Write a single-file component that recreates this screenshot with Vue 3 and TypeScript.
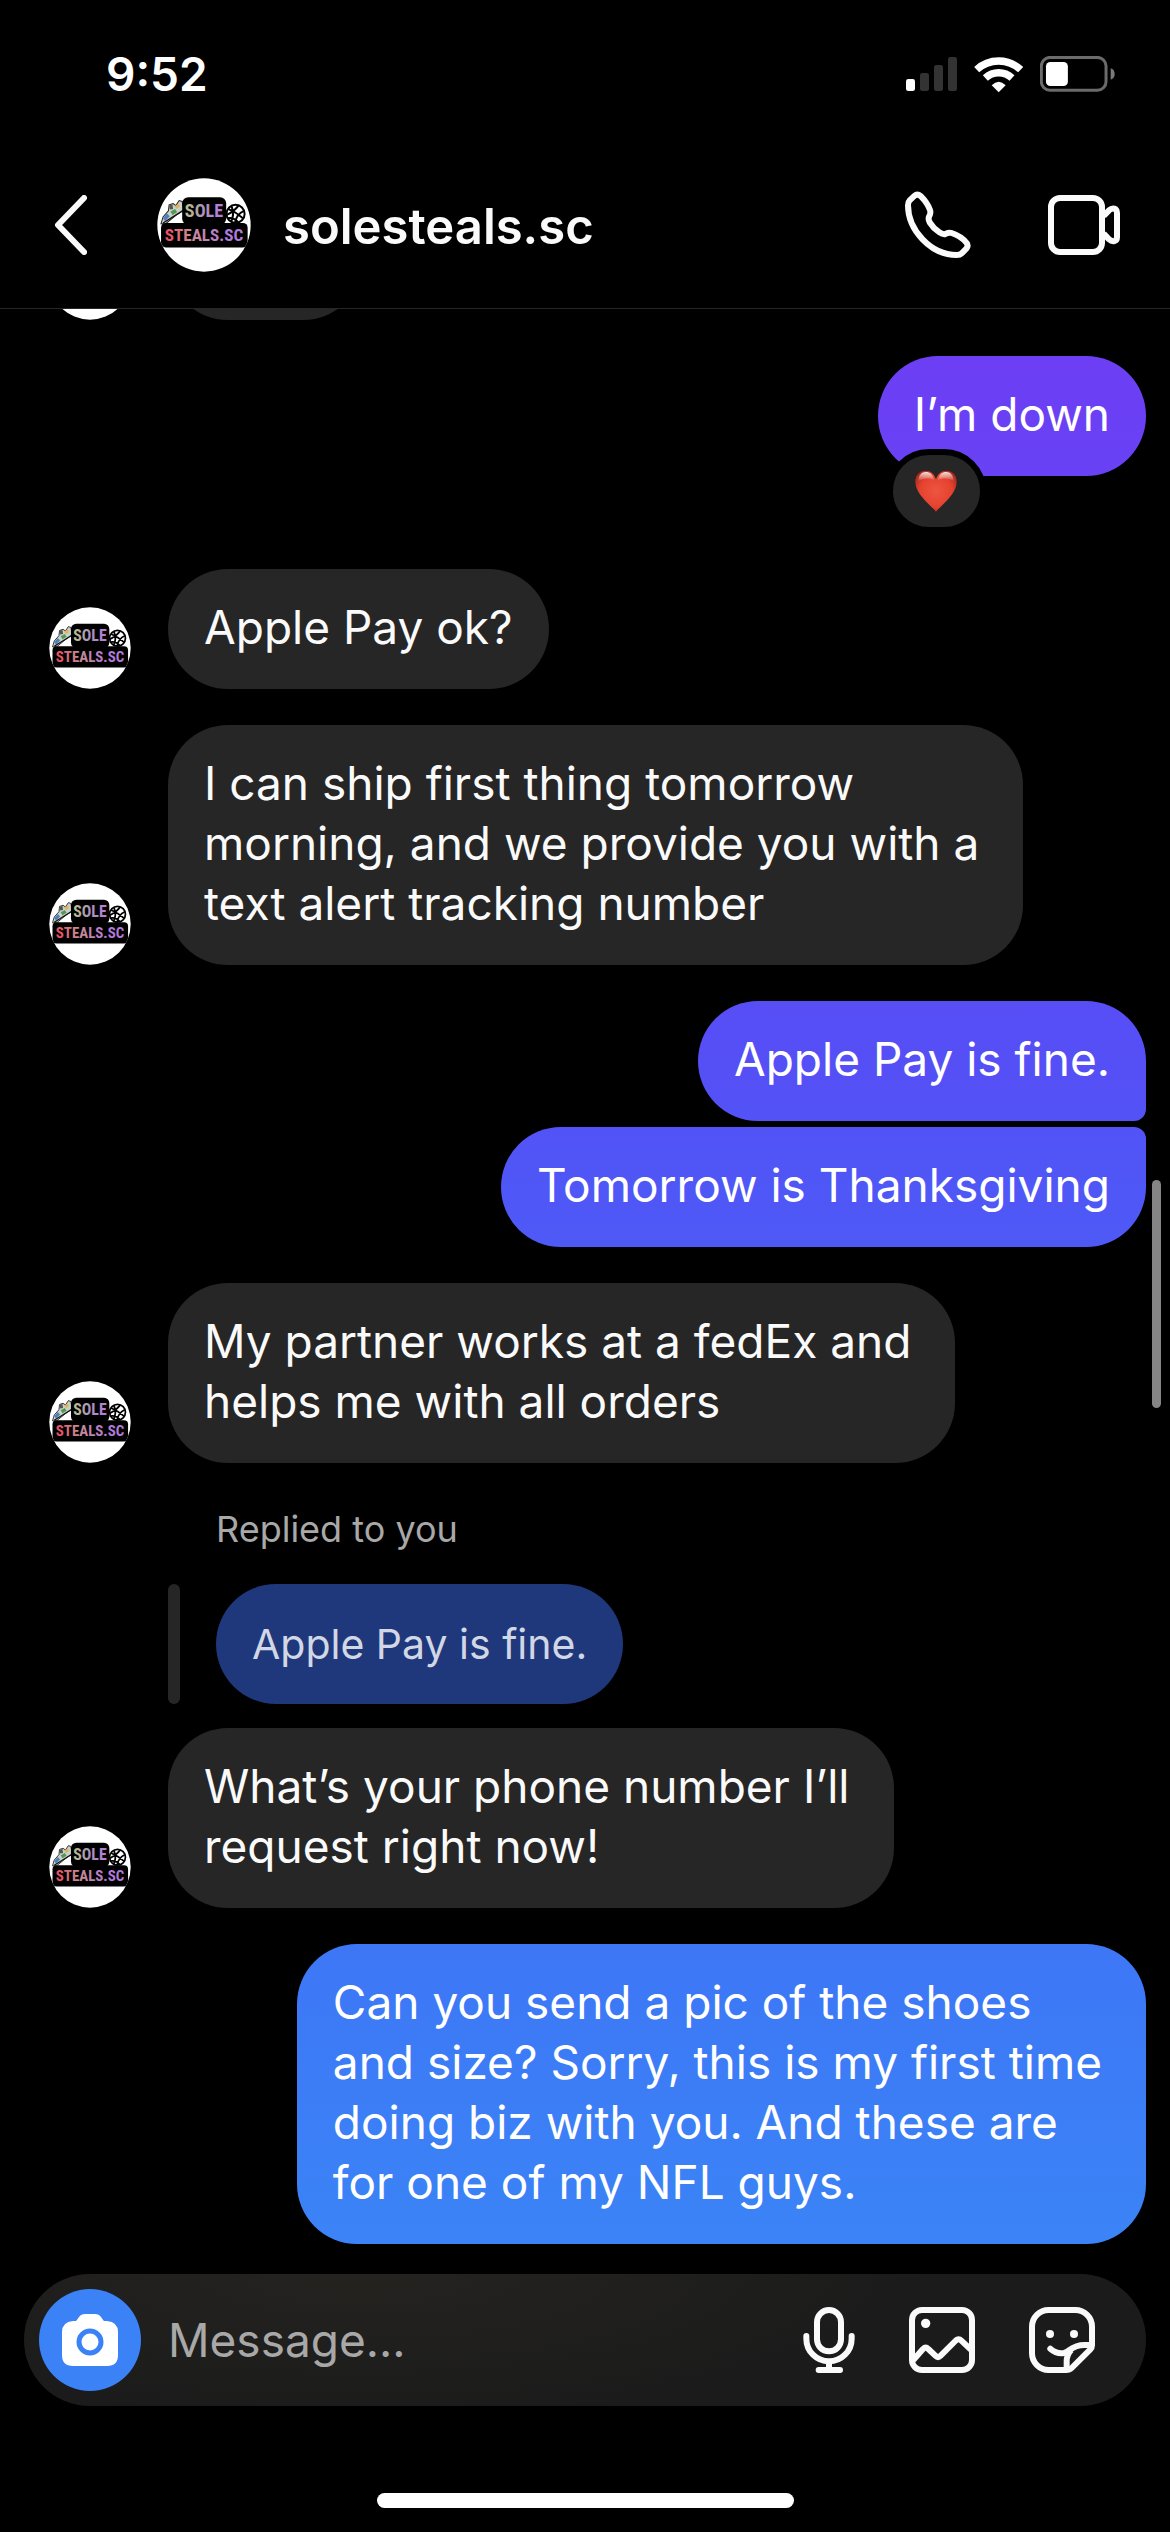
<script setup lang="ts">
import { ref } from 'vue'

interface Message {
  text: string
  joinTop?: boolean
  joinBottom?: boolean
  liked?: boolean
}

interface Group {
  from: 'me' | 'them'
  quote?: string
  clipped?: boolean
  messages: Message[]
}

const contact = 'solesteals.sc'
const draft = ref('')

const isMultiline = (message: Message): boolean => message.text.includes('\n')

const groups: Group[] = [
  { from: 'them', clipped: true, messages: [{ text: '' }] },
  { from: 'me', messages: [{ text: 'I’m down', liked: true }] },
  { from: 'them', messages: [{ text: 'Apple Pay ok?' }] },
  {
    from: 'them',
    messages: [
      { text: 'I can ship first thing tomorrow\nmorning, and we provide you with a\ntext alert tracking number' },
    ],
  },
  {
    from: 'me',
    messages: [
      { text: 'Apple Pay is fine.', joinBottom: true },
      { text: 'Tomorrow is Thanksgiving', joinTop: true },
    ],
  },
  { from: 'them', messages: [{ text: 'My partner works at a fedEx and\nhelps me with all orders' }] },
  {
    from: 'them',
    quote: 'Apple Pay is fine.',
    messages: [{ text: 'What’s your phone number I’ll\nrequest right now!' }],
  },
  {
    from: 'me',
    messages: [
      {
        text: 'Can you send a pic of the shoes\nand size? Sorry, this is my first time\ndoing biz with you. And these are\nfor one of my NFL guys.',
      },
    ],
  },
]
</script>

<template>
  <div class="screen">
    <!-- Shared artwork: the shop logo used by every avatar -->
    <svg class="sprite" aria-hidden="true">
      <defs>
        <linearGradient id="sole-fill" gradientUnits="userSpaceOnUse" x1="138" y1="0" x2="245" y2="0">
          <stop offset="0" stop-color="#bfc08c" />
          <stop offset="0.45" stop-color="#a996b8" />
          <stop offset="1" stop-color="#b57ce0" />
        </linearGradient>
        <linearGradient id="steals-fill" gradientUnits="userSpaceOnUse" x1="75" y1="240" x2="250" y2="190">
          <stop offset="0" stop-color="#f5405c" />
          <stop offset="0.45" stop-color="#c98a90" />
          <stop offset="1" stop-color="#b07ade" />
        </linearGradient>
        <clipPath id="logo-clip"><circle cx="192" cy="180" r="139" /></clipPath>
        <symbol id="shop-logo" viewBox="52 40 280 280">
          <circle cx="192" cy="180" r="139" fill="#fff" />
          <g clip-path="url(#logo-clip)">
            <path d="M64 176 L70 156 L86 138 L88 120 L100 116 L108 122 L118 107 L127 110 L130 128 L134 134 L110 150 L78 176 Z" fill="#c9d2c6" stroke="#222" stroke-width="3" />
            <path d="M70 160 L82 146 L90 154 L76 168 Z" fill="#4a7fc4" />
            <path d="M92 140 L106 132 L112 142 L98 150 Z" fill="#4f9a5a" />
            <path d="M104 124 L116 116 L120 126 L110 132 Z" fill="#e0b060" />
            <path d="M88 122 L98 118 L100 132 L90 134 Z" fill="#555" />
            <path d="M70 174 L134 134" stroke="#111" stroke-width="4" />
            <rect x="127" y="97" width="131" height="82" rx="18" />
            <circle cx="286" cy="147" r="27" fill="#fff" stroke="#000" stroke-width="6" />
            <path d="M264 132 Q288 142 308 160 M274 124 Q284 150 272 172 M296 121 Q282 140 260 150 M311 138 Q290 146 284 174 M262 160 Q280 156 294 172" fill="none" stroke="#000" stroke-width="6" />
            <rect x="64" y="174" width="258" height="73" rx="14" />
          </g>
          <text x="192" y="156" text-anchor="middle" font-family="'Roboto Condensed', 'Liberation Sans Narrow', 'Open Sans Condensed', Roboto, sans-serif" font-weight="700" font-size="54" fill="url(#sole-fill)">SOLE</text>
          <text x="192" y="229" text-anchor="middle" font-family="'Roboto Condensed', 'Liberation Sans Narrow', 'Open Sans Condensed', Roboto, sans-serif" font-weight="700" font-size="51" fill="url(#steals-fill)">STEALS.SC</text>
        </symbol>
      </defs>
    </svg>

    <div class="status">
      <time class="clock">9:52</time>
      <div class="indicators">
        <svg width="51" height="34" viewBox="171 171 153 102" aria-label="Signal">
          <rect x="171" y="237" width="27" height="36" rx="7" fill="#fff" />
          <rect x="213" y="219" width="27" height="54" rx="7" fill="#333" />
          <rect x="255" y="195" width="27" height="78" rx="7" fill="#333" />
          <rect x="297" y="171" width="27" height="102" rx="7" fill="#333" />
        </svg>
        <svg width="49" height="37" viewBox="373 164 147 111" aria-label="Wi-Fi">
          <g fill="none" stroke="#fff" stroke-width="22">
            <path d="M381 205 A97 97 0 0 1 513 205" />
            <path d="M407 230 A59 59 0 0 1 487 230" />
          </g>
          <path d="M447 273 L426 252 Q447 231 468 252 Z" fill="#fff" />
        </svg>
        <svg width="75" height="36" viewBox="570 168 226 108" aria-label="Battery">
          <rect x="574" y="172" width="195" height="99" rx="26" fill="none" stroke="#6b6b6b" stroke-width="9" />
          <rect x="588" y="186" width="66" height="72" rx="13" fill="#fff" />
          <path d="M783 205 Q795 209 795 222 Q795 235 783 239 Z" fill="#7a7a7a" />
        </svg>
      </div>
    </div>

    <header class="header">
      <button class="icon-button back" type="button" aria-label="Back">
        <svg width="33" height="60" viewBox="0 0 33 60">
          <path d="M30 3 L4 30 L30 57" fill="none" stroke="#fafafa" stroke-width="6" stroke-linecap="round" stroke-linejoin="round" />
        </svg>
      </button>
      <a class="contact" href="#">
        <svg class="contact-avatar" aria-hidden="true"><use href="#shop-logo" /></svg>
        <span class="contact-name">{{ contact }}</span>
      </a>
      <div class="calls">
        <button class="icon-button" type="button" aria-label="Audio call">
          <svg width="68" height="68" viewBox="160 573 204 204" fill="none" stroke="#fafafa" stroke-width="18" stroke-linejoin="round">
            <path d="M192 587 L177 601 Q172 606 172 616 C172 690 240 765 318 765 Q328 765 333 760 L347 746 Q354 738 348 729 C338 716 318 704 303 699 C294 696 290 699 284 702 Q277 704 266 697 Q248 685 237 667 Q232 658 235 650 C239 643 241 638 238 630 C233 616 222 600 211 589 Q200 580 192 587 Z" />
          </svg>
        </button>
        <button class="icon-button" type="button" aria-label="Video call">
          <svg width="72" height="68" viewBox="594 573 216 204" fill="none" stroke="#fafafa" stroke-width="18" stroke-linejoin="round">
            <rect x="603" y="594" width="153" height="162" rx="27" />
            <path d="M761 648 L777 631 Q785 624 793 626 Q801 629 801 639 V711 Q801 721 793 723 Q785 725 777 718 L761 701" />
          </svg>
        </button>
      </div>
    </header>

    <main class="thread">
      <section
        v-for="(group, g) in groups"
        :key="g"
        class="group"
        :class="[`group--${group.from}`, { 'group--clipped': group.clipped, 'group--reacted': group.messages[0].liked }]"
      >
        <div v-if="group.quote" class="reply">
          <span class="reply-label">Replied to you</span>
          <blockquote class="quote">
            <p class="quote-bubble">{{ group.quote }}</p>
          </blockquote>
        </div>
        <div v-for="(message, m) in group.messages" :key="m" class="row">
          <svg v-if="group.from === 'them'" class="avatar" aria-hidden="true"><use href="#shop-logo" /></svg>
          <div
            class="bubble"
            :class="{ 'join-top': message.joinTop, 'join-bottom': message.joinBottom, multiline: isMultiline(message) }"
          >
            <p class="text">{{ message.text }}</p>
            <button v-if="message.liked" class="reaction" type="button" aria-label="Heart reaction">
              <svg width="42" height="42" viewBox="0 0 126 126">
                <defs>
                  <radialGradient id="heart-fill" cx="0.5" cy="0.5" r="0.6">
                    <stop offset="0" stop-color="#ee5540" />
                    <stop offset="0.65" stop-color="#e5422f" />
                    <stop offset="1" stop-color="#a8281b" />
                  </radialGradient>
                  <linearGradient id="heart-shine" x1="0" y1="0" x2="0" y2="1">
                    <stop offset="0" stop-color="#fff" stop-opacity="0.85" />
                    <stop offset="1" stop-color="#fff" stop-opacity="0" />
                  </linearGradient>
                </defs>
                <path d="M63 125 C40 98 1 72 1 35 C1 14 14 2 32 2 C48 2 58 12 63 28 C68 12 78 2 94 2 C112 2 125 14 125 35 C125 72 86 98 63 125 Z" fill="url(#heart-fill)" />
                <path d="M10 34 C10 16 20 6 32 6 C46 6 54 14 57 30 Q34 18 10 34 Z M69 30 C72 14 80 6 94 6 C106 6 116 16 116 34 Q92 18 69 30 Z" fill="url(#heart-shine)" />
              </svg>
            </button>
          </div>
        </div>
      </section>
      <div class="scroll-thumb" aria-hidden="true"></div>
    </main>

    <form class="composer" @submit.prevent>
      <button class="camera" type="button" aria-label="Camera">
        <svg width="56" height="54" viewBox="0 0 56 54">
          <path d="M11 8 H14 Q15 7 17 4 Q19 1 23 1 H33 Q37 1 39 4 Q41 7 42 8 H45 Q56 9 56 19 V42 Q56 53 45 53 H11 Q0 53 0 42 V19 Q0 9 11 8 Z" fill="#fff" />
          <circle cx="28" cy="29" r="11" fill="none" stroke="#3b82f6" stroke-width="5" />
        </svg>
      </button>
      <input v-model="draft" class="field" type="text" placeholder="Message..." aria-label="Message" />
      <div class="tools">
        <button class="icon-button" type="button" aria-label="Voice message">
          <svg width="52" height="66" viewBox="96 141 156 198" fill="none" stroke="#fafafa" stroke-width="18" stroke-linecap="round">
            <rect x="138" y="150" width="72" height="124" rx="36" />
            <path d="M106 228 V236 A68 68 0 0 0 242 236 V228 M174 304 V330 M143 330 H207" />
          </svg>
        </button>
        <button class="icon-button" type="button" aria-label="Photo">
          <svg width="66" height="66" viewBox="417 141 198 198" fill="none" stroke="#fafafa" stroke-width="18" stroke-linejoin="round">
            <rect x="426" y="150" width="180" height="180" rx="30" />
            <path d="M430 300 L459 267 Q467 259 475 267 L496 287 Q504 295 512 287 L556 243 Q565 233 574 242 L604 270" />
            <circle cx="467" cy="190" r="14" fill="#fafafa" stroke="none" />
          </svg>
        </button>
        <button class="icon-button" type="button" aria-label="Stickers">
          <svg width="66" height="66" viewBox="777 141 198 198" fill="none" stroke="#fafafa" stroke-width="18" stroke-linejoin="round">
            <path d="M888 330 H836 A50 50 0 0 1 786 280 V200 A50 50 0 0 1 836 150 H916 A50 50 0 0 1 966 200 V256 Q966 263 961 268 L905 324 Q899 330 888 330 Z" />
            <path d="M841 266 Q860 283 882 279 C901 275 903 255 944 255 H964" stroke-linecap="round" />
            <path d="M890 328 V304 Q890 284 904 270" />
            <circle cx="840" cy="222" r="12" fill="#fafafa" stroke="none" />
            <circle cx="912" cy="222" r="12" fill="#fafafa" stroke="none" />
          </svg>
        </button>
      </div>
    </form>

    <div class="home-indicator" aria-hidden="true"></div>
  </div>
</template>

<style>
body {
  background: #000;
}
</style>

<style scoped>
.screen {
  display: flex;
  flex-direction: column;
  height: 100vh;
  overflow: hidden;
  background: #000;
  color: #fafafa;
  font-family: Inter, 'Liberation Sans', sans-serif;
  font-size: 46px;
  line-height: 60px;
}

.sprite {
  position: absolute;
  width: 0;
  height: 0;
}

svg {
  display: block;
  flex: none;
}

p,
blockquote {
  margin: 0;
}

button {
  display: flex;
  padding: 0;
  border: 0;
  background: none;
}

.status {
  display: flex;
  flex: none;
  align-items: center;
  justify-content: space-between;
  height: 148px;
  padding: 0 55px 0 106px;
}

.clock {
  color: #fff;
  font-weight: 600;
}

.indicators {
  display: flex;
  align-items: center;
  gap: 17px;
}

.header {
  display: flex;
  flex: none;
  align-items: center;
  padding: 30px 50px 36px 54px;
  border-bottom: 1px solid #262626;
}

.contact {
  display: flex;
  flex: 1;
  align-items: center;
  gap: 32px;
  margin-left: 70px;
  color: inherit;
  font-size: 49px;
  font-weight: 600;
  text-decoration: none;
}

.contact-name {
  padding-top: 4px;
}

.contact-avatar {
  width: 94px;
  height: 94px;
}

.calls {
  display: flex;
  align-items: center;
  gap: 76px;
}

.thread {
  position: relative;
  display: flex;
  flex: 1;
  flex-direction: column;
  justify-content: flex-end;
  gap: 36px;
  min-height: 0;
  padding: 0 24px 0 49px;
  overflow: hidden;
}

.group {
  display: flex;
  flex: none;
  flex-direction: column;
  gap: 6px;
}

.group--me {
  align-items: flex-end;
}

.group--them {
  align-items: flex-start;
}

.group--reacted {
  margin-bottom: 57px;
}

.row {
  display: flex;
  align-items: flex-end;
  gap: 37px;
}

.avatar {
  width: 82px;
  height: 82px;
}

.bubble {
  position: relative;
  padding: 28px 36px 32px;
  border-radius: 60px;
  background: #262626;
  white-space: pre-line;
}

.bubble.multiline {
  padding-right: 44px;
}

.group--clipped .bubble {
  width: 123px;
  height: 60px;
}

.group--me .bubble {
  background: linear-gradient(#7638f4 0%, #6b40f5 16%, #554ff6 42%, #4f57f6 47%, #3d78f6 78%, #3b83f6 88%) fixed;
  color: #fff;
}

.bubble.join-bottom {
  border-bottom-right-radius: 12px;
}

.bubble.join-top {
  border-top-right-radius: 12px;
}

.reaction {
  position: absolute;
  top: 93px;
  left: 9px;
  align-items: center;
  justify-content: center;
  width: 99px;
  height: 84px;
  border: 6px solid #000;
  border-radius: 42px;
  background: #262626;
}

.reply {
  display: flex;
  flex-direction: column;
  gap: 25px;
  margin: 0 0 18px 119px;
}

.reply-label {
  margin-left: 48px;
  color: #a8a8a8;
  font-size: 36px;
}

.quote {
  display: flex;
  gap: 36px;
}

.quote::before {
  width: 12px;
  border-radius: 6px;
  background: #262626;
  content: '';
}

.quote-bubble {
  padding: 30px 36px;
  border-radius: 60px;
  background: #1f387c;
  color: #d2d7e5;
  font-size: 41px;
}

.scroll-thumb {
  position: absolute;
  top: 45%;
  right: 9px;
  width: 9px;
  height: 228px;
  border-radius: 5px;
  background: #858585;
}

.composer {
  display: flex;
  flex: none;
  align-items: center;
  margin: 30px 24px 0;
  padding: 15px 51px 15px 15px;
  border-radius: 66px;
  background: radial-gradient(ellipse 50% 110% at 30% 0%, #242320, #1b1b1b);
}

.camera {
  flex: none;
  align-items: center;
  justify-content: center;
  width: 102px;
  height: 102px;
  border-radius: 50%;
  background: #3b82f6;
}

.field {
  flex: 1;
  min-width: 0;
  margin-left: 27px;
  padding: 0;
  border: 0;
  outline: 0;
  background: none;
  color: #fafafa;
  font: inherit;
}

.field::placeholder {
  color: #a8a8a8;
  opacity: 1;
}

.tools {
  display: flex;
  align-items: center;
  gap: 54px;
}

.home-indicator {
  flex: none;
  align-self: center;
  width: 417px;
  height: 15px;
  margin: 87px 0 24px;
  border-radius: 8px;
  background: #fff;
}
</style>
